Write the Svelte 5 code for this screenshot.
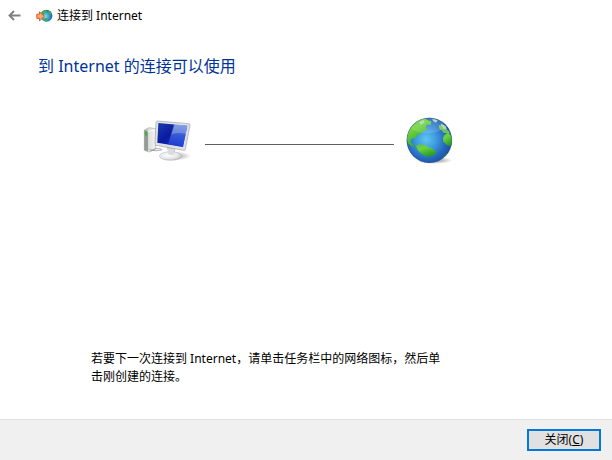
<script lang="ts">
let closed = $state(false);

function close() {
	closed = true;
}
</script>

{#if !closed}
	<div class="wizard">
		<header class="title-bar">
			<button type="button" class="back" aria-label="返回">
				<svg width="13" height="11" viewBox="0 0 13 11" aria-hidden="true">
					<path d="M12.5 5.5H1.5M6 1L1.5 5.5L6 10" fill="none" stroke="#808080" stroke-width="1.9" />
				</svg>
			</button>
			<svg class="app-icon" width="17" height="14" viewBox="0 0 17 14" aria-hidden="true">
				<defs>
					<radialGradient id="small-sea" cx="0.4" cy="0.55" r="0.6">
						<stop offset="0" stop-color="#8adcf5" />
						<stop offset="0.6" stop-color="#3596d2" />
						<stop offset="1" stop-color="#1a5a9c" />
					</radialGradient>
				</defs>
				<circle cx="10.4" cy="6.7" r="6" fill="url(#small-sea)" />
				<path d="M5 4Q7 .8 10 1L11 2.5L8.5 4.5L7.5 7L5.5 6ZM12 1.2Q15 2.4 16 5.5L14 6L12.6 4ZM8 9.5L11 9L12.5 10.5L10.5 12.4Q8.5 12.4 7.5 11Z" fill="#43ad49" />
				<path d="M.8 5.2H3.5V2.8L8.4 7.3L3.5 11.8V9.4H.8Z" fill="#f9a66c" stroke="#d8602c" stroke-width="1" />
			</svg>
			<span>连接到 Internet</span>
		</header>

		<main>
			<h1>到 Internet 的连接可以使用</h1>

			<div class="network">
				<svg width="48" height="44" viewBox="24 24 144 132" role="img" aria-label="计算机">
					<defs>
						<linearGradient id="screen" x1="0" y1="0" x2="1" y2="1">
							<stop offset="0" stop-color="#1c3cae" />
							<stop offset="0.45" stop-color="#0a1aa0" />
							<stop offset="1" stop-color="#1740dc" />
						</linearGradient>
						<linearGradient id="glare" x1="0" y1="0" x2="0" y2="1">
							<stop offset="0" stop-color="#a4c6f8" />
							<stop offset="0.5" stop-color="#4f7bea" />
							<stop offset="1" stop-color="#1a3fd8" />
						</linearGradient>
						<linearGradient id="tower" x1="0" y1="0" x2="1" y2="0">
							<stop offset="0" stop-color="#a5a8a5" />
							<stop offset="0.4" stop-color="#dcdedc" />
							<stop offset="1" stop-color="#f5f5f5" />
						</linearGradient>
						<radialGradient id="base" cx="0.4" cy="0.4" r="0.65">
							<stop offset="0" stop-color="#ffffff" />
							<stop offset="0.65" stop-color="#e4e6e8" />
							<stop offset="1" stop-color="#b4b6b8" />
						</radialGradient>
						<radialGradient id="desk-shadow">
							<stop offset="0" stop-color="#777" stop-opacity="0.6" />
							<stop offset="1" stop-color="#777" stop-opacity="0" />
						</radialGradient>
					</defs>
					<ellipse cx="128" cy="138" rx="40" ry="13" fill="url(#desk-shadow)" />
					<path d="M28 60L42 53L62 56V118L42 126L28 121Z" fill="url(#tower)" stroke="#a8aba9" stroke-width="2" />
					<path d="M28 61L39 65V124L28 120Z" fill="#969b98" />
					<path d="M39 65L62 59" stroke="#fff" stroke-width="2" />
					<path d="M33 64V77" stroke="#39b52c" stroke-width="5" />
					<path d="M47 123Q60 111 79 117M44 118Q58 126 82 119" fill="none" stroke="#858585" stroke-width="2" />
					<path d="M95 108H122L119 131H101Z" fill="#bdc1c5" />
					<ellipse cx="107" cy="138" rx="34" ry="13" fill="url(#base)" stroke="#b4b4b4" stroke-width="1.5" />
					<path d="M99 114L119 117L116 134Q106 137 98 132Z" fill="#dadde0" />
					<path d="M67 33L162 41Q166 42 165 46L151 118Q150 122 146 121L63 106Q59 105 60 101L63 37Q64 33 67 33Z" fill="#dfe1e4" stroke="#a0a3a7" stroke-width="2" />
					<path d="M70 39L157 47L144 111L67 98Z" fill="url(#screen)" />
					<path d="M117 43L157 47L144 111L99 103Z" fill="url(#glare)" opacity=".6" />
					<path d="M120 43L157 47L152 73Q132 65 110 73Z" fill="#d0e2ff" opacity=".3" />
				</svg>
				<span class="wire"></span>
				<svg width="48" height="48" viewBox="63 33 144 144" role="img" aria-label="Internet">
					<defs>
						<radialGradient id="sea" cx="0.43" cy="0.48" r="0.62">
							<stop offset="0" stop-color="#62c6f2" />
							<stop offset="0.35" stop-color="#3d9ce0" />
							<stop offset="0.7" stop-color="#2566bd" />
							<stop offset="1" stop-color="#1d4892" />
						</radialGradient>
						<linearGradient id="land" x1="0" y1="0" x2="0.5" y2="1">
							<stop offset="0" stop-color="#5fb45c" />
							<stop offset="0.4" stop-color="#6ed43a" />
							<stop offset="1" stop-color="#2b9a2c" />
						</linearGradient>
						<radialGradient id="globe-shadow">
							<stop offset="0" stop-color="#555" stop-opacity="0.7" />
							<stop offset="1" stop-color="#555" stop-opacity="0" />
						</radialGradient>
						<clipPath id="disc"><circle cx="133" cy="106" r="68" /></clipPath>
					</defs>
					<ellipse cx="148" cy="166" rx="54" ry="11" fill="url(#globe-shadow)" />
					<circle cx="133" cy="106" r="68" fill="url(#sea)" />
					<g clip-path="url(#disc)">
						<path d="M66 104Q68 58 105 42L120 40L127 46L139 49L137 60L125 59L122 68L127 73L118 78L107 84L104 92L98 88L92 95L94 102L87 99L79 101L77 112L85 119L91 128L80 124L70 116Z" fill="url(#land)" />
						<path d="M102 51L116 45L119 52L108 59ZM142 41L158 46L153 53L144 48ZM168 56L182 63L186 74L178 78L172 70L166 67Z" fill="#a9d6b4" />
						<path d="M161 59L171 64L176 73L184 72L195 82L190 88L183 84L176 84L170 76L163 72Z" fill="#6cc45a" />
						<path d="M178 91L189 82L203 98L202 121L193 123L184 119L175 109L174 99Z" fill="url(#land)" />
						<path d="M93 122L104 117L118 119L130 126L145 132L154 140L150 149L139 154L126 155L115 150L104 142L97 133Z" fill="url(#land)" />
						<path d="M172 159L184 146L190 147L179 161Z" fill="#379e4c" />
						<ellipse cx="127" cy="62" rx="51" ry="23" fill="#fff" opacity=".14" />
					</g>
					<circle cx="133" cy="106" r="67" fill="none" stroke="#1f4f8b" stroke-width="2" opacity=".4" />
				</svg>
			</div>

			<p>若要下一次连接到 Internet，请单击任务栏中的网络图标，然后单击刚创建的连接。</p>
		</main>

		<footer>
			<button type="button" class="close" accesskey="c" onclick={close}>关闭(<u>C</u>)</button>
		</footer>
	</div>
{/if}

<style>
:global(body) {
	margin: 0;
	background: #fff;
}

.wizard {
	display: flex;
	flex-direction: column;
	min-height: 100vh;
	font-family: "Noto Sans", "Noto Sans CJK SC", sans-serif;
	font-size: 12px;
	line-height: 18px;
	color: #000;
	background: #fff;
}

.title-bar {
	display: flex;
	align-items: center;
	height: 31px;
	padding: 0 8px;
}

.back {
	display: flex;
	padding: 0;
	background: none;
	border: 0;
}

.app-icon {
	margin: 0 4px 0 15px;
}

main {
	display: flex;
	flex: 1;
	flex-direction: column;
	padding: 23px 38px 33px;
}

h1 {
	margin: 0;
	font-size: 16px;
	font-weight: 400;
	line-height: 24px;
	color: #003399;
}

.network {
	display: flex;
	align-items: center;
	margin: 38px 120px 0 105px;
}

.wire {
	flex: 1;
	height: 1px;
	margin: 8px 12px 0 14px;
	background: #606060;
}

p {
	margin: auto 128px 0 53px;
}

footer {
	display: flex;
	justify-content: flex-end;
	padding: 9px 11px;
	background: #f0f0f0;
	border-top: 1px solid #dfdfdf;
}

.close {
	min-width: 74px;
	height: 22px;
	padding: 0 12px;
	font: inherit;
	line-height: 16px;
	color: #000;
	background: #e1e1e1;
	border: 2px solid #0078d7;
}

.close:hover {
	background: #e5f1fb;
}
</style>
